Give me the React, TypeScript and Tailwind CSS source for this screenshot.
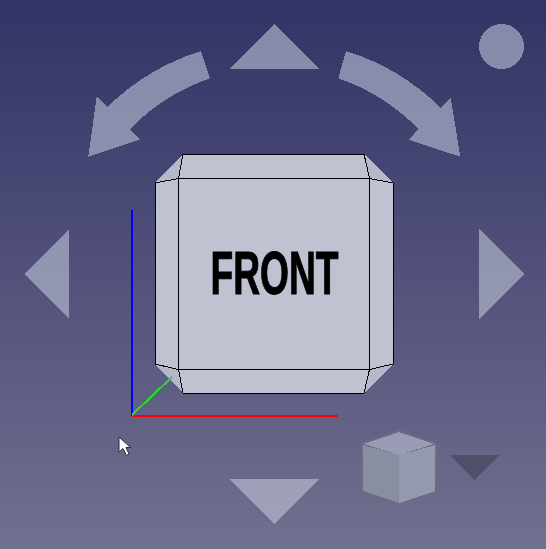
import React from 'react';

const overlayClass = 'fill-[#c2c8da] opacity-[.58]';

// the four chamfer triangles are all the same shape, so keep one per corner
const corners = [
  { tri: '155,183 183,154 178,178', a: '155,183', b: '183,154', c: '178.5,178.5' },
  { tri: '393,183 364,154 369,178', a: '393,183', b: '364,154', c: '369.5,178.5' },
  { tri: '155,364 183,393 178,369', a: '155,364', b: '183,393', c: '178.5,369.5' },
  { tri: '393,364 364,393 369,369', a: '393,364', b: '364,393', c: '369.5,369.5' },
];

function NaviArrows() {
  return (
    <g className={overlayClass} shapeRendering="crispEdges">
      <polygon points="274.5,24 229.5,69 319.5,69" />
      <polygon points="479,229 524,274 479,319" />
      <polygon points="69,229 24,274 69,319" />
      <polygon points="229.5,479 319.5,479 274.5,524" />
      <circle cx="501.5" cy="46.5" r="22.5" />
      <path d="M346 51A234.5 234.5 0 0 1 440.7 107.7L450.7 97.7L460.3 156.7L409 140L418.3 129A205 205 0 0 0 338.3 78.3Z" />
      <path d="M201 51A234.5 234.5 0 0 0 107.7 106.7L96.7 96.7L88.3 156.7L140 139.5L130 129A205 205 0 0 1 210 78.3Z" />
    </g>
  );
}

function MainCube() {
  return (
    <g>
      <polygon
        points="183,154 364,154 393,183 393,364 364,393 183,393 155,364 155,183"
        className="fill-[#bec2d1]"
        shapeRendering="crispEdges"
      />
      {corners.map((corner) => (
        <polygon
          key={corner.tri}
          points={corner.tri}
          className="fill-[#b5b8c9]"
          shapeRendering="crispEdges"
        />
      ))}
      <g className="stroke-black" strokeWidth="1" fill="none" shapeRendering="crispEdges">
        <path d="M183 154.5H364M155.5 183V364M393.5 183V364M183 393.5H364" />
        <path d="M178.5 178V369M369.5 178V369M178 178.5H369M178 369.5H369" />
        {corners.map((corner) => (
          <polyline key={corner.c} points={`${corner.a} ${corner.c} ${corner.b}`} />
        ))}
      </g>
      <text
        x="210.5"
        y="294"
        textLength="128"
        lengthAdjust="spacingAndGlyphs"
        strokeWidth="1"
        className="fill-black stroke-black text-[61px] font-bold grayscale"
        style={{ fontFamily: '"Liberation Sans", Arial, sans-serif' }}
      >
        FRONT
      </text>
    </g>
  );
}

function Axes() {
  return (
    <g strokeWidth="2" shapeRendering="crispEdges">
      <line x1="132" y1="210" x2="132" y2="416" className="stroke-[#0000ff]" />
      <line x1="132" y1="415.5" x2="338" y2="415.5" className="stroke-[#ff0000]" />
      <line x1="132" y1="415" x2="172" y2="377" className="stroke-[#22e022]" />
    </g>
  );
}

function MiniCube() {
  return (
    <g shapeRendering="crispEdges">
      <polygon
        points="399,430 437,443 437,493 399,505 361,493 361,443"
        className="fill-[#6c6c84]"
      />
      <polygon points="363,445 363,491 399,503 399,455" className="fill-[#8a8ea1]" />
      <polygon points="399,455 399,503 435,491 435,445" className="fill-[#9599ae]" />
      <polygon points="399,432 434,444 399,455 364,444" className="fill-[#9a9cb6]" />
      <polygon points="450,455 499,455 474.5,480" className="fill-[#50506a]" />
    </g>
  );
}

function Cursor() {
  return (
    <path
      d="M119 437V452L123 448.5L126.5 455.5L129 454L126 447.5H130.5Z"
      className="fill-white stroke-[#2a2a3a]"
      strokeWidth="1"
    />
  );
}

export default function App() {
  return (
    <div className="h-[549px] w-[546px] overflow-hidden bg-linear-to-b from-[#333366] to-[#72708f]">
      <svg width="546" height="549" viewBox="0 0 546 549" className="block">
        <NaviArrows />
        <MainCube />
        <Axes />
        <MiniCube />
        <Cursor />
      </svg>
    </div>
  );
}
